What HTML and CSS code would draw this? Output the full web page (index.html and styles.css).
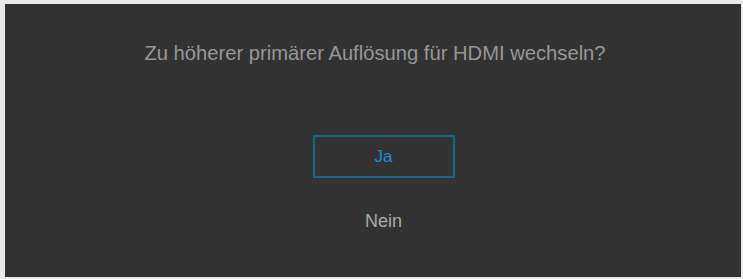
FILE: index.html
```html
<!DOCTYPE html>
<html lang="de">
<head>
    <meta charset="UTF-8">
    <meta name="viewport" content="width=device-width, initial-scale=1.0">
    <title>HDMI Auflösung</title>
    <link rel="stylesheet" href="styles.css">
</head>
<body>
    <div class="screen">
        <p class="question">Zu höherer primärer Auflösung für HDMI wechseln?</p>
        <div class="choices">
            <button class="choice selected">Ja</button>
            <button class="choice">Nein</button>
        </div>
    </div>
</body>
</html>
```

FILE: styles.css
```css
body {
    margin: 0;
    background-color: #e9e9e9;
    font-family: "Liberation Sans", Arial, sans-serif;
}
.screen {
    margin: 4px 2px 2px 5px;
    height: 273px;
    background-color: #323232;
    display: flex;
    flex-direction: column;
    align-items: center;
}
.question {
    margin: 37px 0 0 4px;
    font-size: 20.2px;
    line-height: 24px;
    color: #979797;
}
.choices {
    margin-top: 70px;
    margin-left: 21px;
    display: flex;
    flex-direction: column;
    align-items: center;
    gap: 33px;
}
.choice {
    font-family: inherit;
    font-size: 18px;
    background: none;
    border: none;
    color: #a9a9a9;
    padding: 0;
    cursor: pointer;
}
.selected {
    width: 142px;
    height: 43px;
    border: 2px solid #1d6680;
    color: #1e8fd2;
    font-size: 17px;
}
```
